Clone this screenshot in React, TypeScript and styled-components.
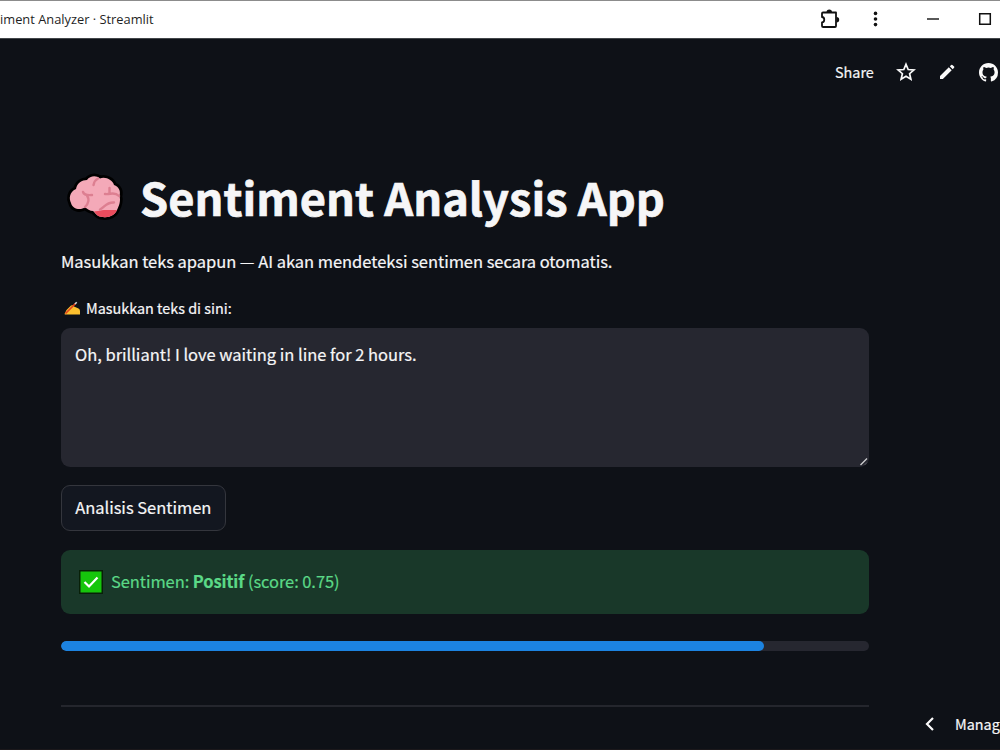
import React from 'react';
import styled, { createGlobalStyle } from 'styled-components';

const GlobalStyle = createGlobalStyle`
  * { box-sizing: border-box; }
  html, body { margin: 0; padding: 0; background: #0e1117; overflow: hidden; }
  body {
    font-family: "Noto Sans CJK SC", "Noto Sans", sans-serif;
    color: #f6f6f7;
    -webkit-text-stroke: 0.2px currentColor;
  }
  h1, p { margin: 0; }
  svg { display: block; flex: none; }
`;

const Window = styled.div`
  width: 1000px;
  height: 750px;
  display: flex;
  flex-direction: column;
  overflow: hidden;
  background: #0e1117;
  border-bottom: 1px solid #1b181b;
`;

const TitleBar = styled.header`
  height: 39px;
  flex: none;
  display: flex;
  align-items: center;
  justify-content: space-between;
  padding-bottom: 1px;
  background: #fff;
  border-top: 1px solid #8c8c8c;
  border-bottom: 1px solid #43464a;
  color: #1f1f1f;
`;

const TabTitle = styled.span`
  font: 12.85px/18px "Open Sans", sans-serif;
  -webkit-text-stroke: 0;
  white-space: nowrap;
`;

const WindowControls = styled.div`
  display: flex;
  align-items: center;
  width: 180px;
  color: #111;
  svg + svg { margin-left: 30px; }
  svg:nth-child(3) { margin-left: 47px; }
  svg:nth-child(4) { margin-left: 36px; }
`;

const Toolbar = styled.nav`
  height: 66px;
  flex: none;
  display: flex;
  align-items: center;
  padding-left: 835px;
`;

const ToolbarLabel = styled.span`
  width: 61px;
  flex: none;
  padding-bottom: 1px;
  font-size: 14.4px;
  line-height: 20px;
`;

const ToolbarIcon = styled.span<{ $space: number }>`
  flex: none;
  margin-right: ${(p) => p.$space}px;
`;

const Main = styled.main`
  width: 807.5px;
  margin: 59px 0 0 61px;
  flex: none;
  display: flex;
  flex-direction: column;
`;

const Heading = styled.h1`
  height: 66px;
  display: flex;
  align-items: center;
  gap: 15px;
  padding-left: 4px;
  font-size: 45.2px;
  line-height: 66px;
  font-weight: 700;
  white-space: nowrap;
  -webkit-text-stroke: 0.7px currentColor;
`;

const Intro = styled.p`
  margin-top: 17px;
  font-size: 16.5px;
  letter-spacing: -0.04px;
  line-height: 28px;
  white-space: nowrap;
`;

const FieldLabel = styled.label`
  display: flex;
  align-items: center;
  gap: 5px;
  height: 24px;
  margin-top: 21px;
  padding-left: 3px;
  font-size: 14.4px;
  line-height: 24px;
`;

const TextBox = styled.div`
  height: 139px;
  margin-top: 8px;
  padding: 12px 0 0 14px;
  display: flex;
  justify-content: space-between;
  background: #262730;
  border-radius: 9px;
  font-size: 16.5px;
  letter-spacing: -0.02px;
  line-height: 28px;
`;

const ResizeGrip = styled.svg`
  align-self: flex-end;
`;

const Button = styled.button`
  width: 164.5px;
  height: 46px;
  margin-top: 18px;
  padding: 0 0 2px;
  border: 1px solid #34363d;
  border-radius: 9px;
  background: #131720;
  color: #f6f6f7;
  font: 16.5px/28px "Noto Sans CJK SC", sans-serif;
  letter-spacing: -0.03px;
`;

const Alert = styled.div`
  height: 64.5px;
  margin-top: 18.5px;
  padding: 0 0 0 18px;
  display: flex;
  align-items: center;
  gap: 8px;
  border-radius: 9px;
  background: #193829;
  color: #5bd987;
  font-size: 16.5px;
  letter-spacing: -0.08px;
  line-height: 28px;
`;

const AlertText = styled.span`
  padding-bottom: 2px;
`;

const Track = styled.div`
  height: 9.5px;
  margin-top: 27px;
  border-radius: 5px;
  background: #262730;
  overflow: hidden;
`;

const Fill = styled.div`
  width: 702.5px;
  height: 100%;
  border-radius: 5px;
  background: #1c83e1;
`;

const Divider = styled.hr`
  width: 100%;
  height: 1.5px;
  margin: 54.5px 0 0;
  border: 0;
  background: #24262d;
`;

const ManageBar = styled.footer`
  display: flex;
  align-items: center;
  gap: 20px;
  height: 34px;
  padding-left: 925px;
  font-size: 14.4px;
  line-height: 24px;
  white-space: nowrap;
`;

const brainOutline =
  'M6 32C4 28 4 21 11 18C12 12 17 9 22 9C25 5 31 4 35 7.5C40 5 48 9 49 14C54 16 56 20 54.5 25C56 30 54 35 52 39C50 44 44 47 38 46C33 46 31 43 28 40C25 40 22 38 20 36C16 40 7 38 6 32Z';

const Brain = () => (
  <svg width="60" height="52" viewBox="0 0 60 52">
    <path d={brainOutline} fill="#000" stroke="#000" strokeWidth="5.5" strokeLinejoin="round" />
    <path d={brainOutline} fill="#f4a9b8" />
    <path d="M29 40C33 41 36 38.5 40 39H52C50 44 44 47 38 46C33 46 31 43 29 40Z" fill="#ea4c5d" />
    <path d="M18 21C19 24 22 24.5 27 24M22 24.5C25 29 23 33 20 36M33 7.5C30 9 29 11 28.5 14M40 23C45 24 49 20 54 25M44.5 17V22M49 31.5C41 31 40 36 35 38.5" fill="none" stroke="#dd7f91" strokeWidth="2.4" strokeLinecap="round" />
  </svg>
);

const WritingHand = () => (
  <svg width="17" height="16" viewBox="0 0 17 16">
    <path d="M.5 14L2.5 10L7 5.5L9.5 5L10 6.5L14.5 8.5Q16 9 16 11V14.5H1Z" fill="#fcc02e" />
    <path d="M1.5 13.5L11.5 3.5" stroke="#e0451f" strokeWidth="1.7" />
    <path d="M11 4L12.7 2.3" stroke="#d6d6d6" strokeWidth="1.6" />
  </svg>
);

const CheckMark = () => (
  <svg width="24" height="24" viewBox="0 0 24 24">
    <rect x=".7" y=".7" width="22.6" height="22.6" fill="#16c60c" stroke="#082008" strokeWidth="1.6" />
    <path d="M5.5 12L10 16.5L18.5 7.5" fill="none" stroke="#fff" strokeWidth="2.2" />
  </svg>
);

export default function App() {
  return (
    <Window>
      <GlobalStyle />
      <TitleBar>
        <TabTitle>iment Analyzer · Streamlit</TabTitle>
        <WindowControls>
          <svg width="21" height="22" viewBox="0 0 21 22">
            <path d="M3 4.5H16V18Q16 19 15 19H3.2Q2 19 2 18V14.3C5 14 5 9.3 2 9V5.5Q2 4.5 3 4.5Z" fill="none" stroke="currentColor" strokeWidth="1.8" strokeLinejoin="round" />
            <path d="M6.5 4.2A2.7 2.7 0 0 1 12 4.2ZM16.5 9A2.7 2.7 0 0 1 16.5 14.4Z" fill="currentColor" />
          </svg>
          <svg width="9" height="16" viewBox="0 0 9 16" fill="currentColor">
            <circle cx="4.5" cy="2.4" r="1.8" /><circle cx="4.5" cy="8" r="1.8" /><circle cx="4.5" cy="13.6" r="1.8" />
          </svg>
          <svg width="12" height="12" viewBox="0 0 12 12"><path d="M0 6H12" stroke="currentColor" strokeWidth="1.4" /></svg>
          <svg width="20" height="12" viewBox="0 0 20 12"><path d="M4.7 .7H15.3V11.3H4.7Z" fill="none" stroke="currentColor" strokeWidth="1.5" /></svg>
        </WindowControls>
      </TitleBar>
      <Toolbar>
        <ToolbarLabel>Share</ToolbarLabel>
        <ToolbarIcon $space={22}>
          <svg width="20" height="20" viewBox="0 0 20 20"><path d="M10 2.3L12.2 7.5L17.9 8L13.6 11.7L14.9 17.3L10 14.3L5.1 17.3L6.4 11.7L2.1 8L7.8 7.5Z" fill="none" stroke="#fafafa" strokeWidth="1.7" strokeLinejoin="miter" /></svg>
        </ToolbarIcon>
        <ToolbarIcon $space={23}>
          <svg width="18" height="18" viewBox="0 0 18 18" fill="#fafafa"><path d="M2 13.1L10.8 4.3L13.7 7.2L4.9 16H2ZM11.8 3.3L13.2 1.9Q13.8 1.4 14.4 1.9L16.1 3.6Q16.6 4.2 16.1 4.8L14.7 6.2Z" /></svg>
        </ToolbarIcon>
        <ToolbarIcon $space={0}>
          <svg width="19" height="19" viewBox="0 0 16 16" fill="#fafafa"><path d="M8 0C3.58 0 0 3.58 0 8c0 3.54 2.29 6.53 5.47 7.59.4.07.55-.17.55-.38 0-.19-.01-.82-.01-1.49-2.01.37-2.53-.49-2.69-.94-.09-.23-.48-.94-.82-1.13-.28-.15-.68-.52-.01-.53.63-.01 1.08.58 1.23.82.72 1.21 1.87.87 2.33.66.07-.52.28-.87.51-1.07-1.78-.2-3.64-.89-3.64-3.95 0-.87.31-1.59.82-2.15-.08-.2-.36-1.02.08-2.12 0 0 .67-.21 2.2.82a7.6 7.6 0 0 1 4 0c1.53-1.04 2.2-.82 2.2-.82.44 1.1.16 1.92.08 2.12.51.56.82 1.27.82 2.15 0 3.07-1.87 3.75-3.65 3.95.29.25.54.73.54 1.48 0 1.07-.01 1.93-.01 2.2 0 .21.15.46.55.38A8.01 8.01 0 0 0 16 8c0-4.42-3.58-8-8-8Z" /></svg>
        </ToolbarIcon>
      </Toolbar>
      <Main>
        <Heading><Brain /><span>Sentiment Analysis App</span></Heading>
        <Intro>Masukkan teks apapun — AI akan mendeteksi sentimen secara otomatis.</Intro>
        <FieldLabel><WritingHand /><span>Masukkan teks di sini:</span></FieldLabel>
        <TextBox>
          <span>Oh, brilliant! I love waiting in line for 2 hours.</span>
          <ResizeGrip width="11" height="11" viewBox="0 0 11 11"><path d="M2.5 9L9 2.5" stroke="#d0d0d3" strokeWidth="1.2" /><path d="M6.5 9L9 6.5" stroke="#55565e" strokeWidth="1" /></ResizeGrip>
        </TextBox>
        <Button>Analisis Sentimen</Button>
        <Alert><CheckMark /><AlertText>Sentimen: <b>Positif</b> (score: 0.75)</AlertText></Alert>
        <Track><Fill /></Track>
        <Divider />
      </Main>
      <ManageBar>
        <svg width="10" height="16" viewBox="0 0 10 16"><path d="M8 2L2 8L8 14" fill="none" stroke="#fafafa" strokeWidth="2.2" /></svg>
        <span>Manag</span>
      </ManageBar>
    </Window>
  );
}
